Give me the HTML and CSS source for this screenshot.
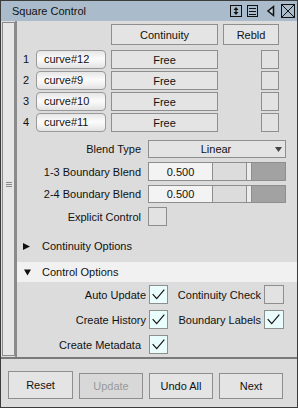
FILE: index.html
```html
<!DOCTYPE html>
<html lang="en">
<head>
    <meta charset="UTF-8">
    <meta name="viewport" content="width=device-width, initial-scale=1.0">
    <title>Square Control</title>
    <link rel="stylesheet" href="styles.css">
</head>
<body>
    <div class="window">
        <div class="titlebar">
            <span class="title">Square Control</span>
            <svg class="tools" width="68" height="18" viewBox="0 0 68 18">
                <!-- resize -->
                <rect x="2.5" y="3.5" width="11" height="11" fill="none" stroke="#111"/>
                <line x1="8" y1="7" x2="8" y2="11" stroke="#111" stroke-width="1.2"/>
                <polygon points="5.5,8 8,5 10.5,8" fill="#111"/>
                <polygon points="5.5,10 8,13 10.5,10" fill="#111"/>
                <!-- menu -->
                <rect x="19.5" y="3.5" width="10" height="11" fill="none" stroke="#111"/>
                <line x1="21" y1="6.5" x2="28" y2="6.5" stroke="#111"/>
                <line x1="21" y1="9.5" x2="28" y2="9.5" stroke="#111"/>
                <line x1="21" y1="12.5" x2="28" y2="12.5" stroke="#111"/>
                <!-- collapse -->
                <polygon points="45.5,4.5 40,9 45.5,13.5" fill="#c8d3dc" stroke="#111" stroke-width="1.5"/>
                <!-- close -->
                <rect x="53.5" y="2.5" width="13" height="13" fill="none" stroke="#111"/>
                <line x1="54" y1="3" x2="66" y2="15" stroke="#111"/>
                <line x1="66" y1="3" x2="54" y2="15" stroke="#111"/>
            </svg>
        </div>

        <div class="main">
            <div class="side">
                <div class="strip">
                    <svg class="grip" width="6" height="6" viewBox="0 0 6 6">
                        <line x1="0" y1="0.5" x2="6" y2="0.5" stroke="#8a8a8a"/>
                        <line x1="0" y1="2.5" x2="6" y2="2.5" stroke="#8a8a8a"/>
                        <line x1="0" y1="4.5" x2="6" y2="4.5" stroke="#8a8a8a"/>
                    </svg>
                </div>
            </div>

            <div class="content">
                <div class="curves">
                    <div></div>
                    <div></div>
                    <div class="btn head">Continuity</div>
                    <div class="btn head rebld">Rebld</div>

                    <div class="num">1</div>
                    <div class="curve">curve#12</div>
                    <div class="btn">Free</div>
                    <div></div>
                    <div class="box"></div>

                    <div class="num">2</div>
                    <div class="curve">curve#9</div>
                    <div class="btn">Free</div>
                    <div></div>
                    <div class="box"></div>

                    <div class="num">3</div>
                    <div class="curve">curve#10</div>
                    <div class="btn">Free</div>
                    <div></div>
                    <div class="box"></div>

                    <div class="num">4</div>
                    <div class="curve">curve#11</div>
                    <div class="btn">Free</div>
                    <div></div>
                    <div class="box"></div>
                </div>

                <div class="form">
                    <div class="label">Blend Type</div>
                    <div class="select">
                        <span class="value">Linear</span>
                        <svg width="7" height="5" viewBox="0 0 7 5"><polygon points="0,0 7,0 3.5,5" fill="#444"/></svg>
                    </div>

                    <div class="label">1-3 Boundary Blend</div>
                    <div class="slider-group">
                        <div class="field">0.500</div>
                        <div class="slider"><div class="track"></div><div class="thumb"></div><div class="fill"></div></div>
                    </div>

                    <div class="label">2-4 Boundary Blend</div>
                    <div class="slider-group">
                        <div class="field">0.500</div>
                        <div class="slider"><div class="track"></div><div class="thumb"></div><div class="fill"></div></div>
                    </div>

                    <div class="label">Explicit Control</div>
                    <div class="box"></div>
                </div>

                <div class="section">
                    <svg class="arrow" width="7" height="7" viewBox="0 0 7 7"><polygon points="0,0 7,3.5 0,7" fill="#111"/></svg>
                    <span>Continuity Options</span>
                </div>

                <div class="section open">
                    <svg class="arrow" width="7" height="7" viewBox="0 0 7 7"><polygon points="0,0.5 7,0.5 3.5,6.5" fill="#111"/></svg>
                    <span>Control Options</span>
                </div>

                <div class="checks">
                    <div class="label">Auto Update</div>
                    <div class="box checked"><svg viewBox="0 0 19 19"><polyline points="3,9 7.5,14 16,4" fill="none" stroke="#111" stroke-width="1.3"/></svg></div>
                    <div class="label">Continuity Check</div>
                    <div class="box wide"></div>

                    <div class="label">Create History</div>
                    <div class="box checked"><svg viewBox="0 0 19 19"><polyline points="3,9 7.5,14 16,4" fill="none" stroke="#111" stroke-width="1.3"/></svg></div>
                    <div class="label">Boundary Labels</div>
                    <div class="box wide checked"><svg viewBox="0 0 19 19"><polyline points="3,9 7.5,14 16,4" fill="none" stroke="#111" stroke-width="1.3"/></svg></div>

                    <div class="label far">Create Metadata</div>
                    <div class="box checked"><svg viewBox="0 0 19 19"><polyline points="3,9 7.5,14 16,4" fill="none" stroke="#111" stroke-width="1.3"/></svg></div>
                </div>
            </div>
        </div>

        <div class="footer">
            <div class="btn action focus">Reset</div>
            <div class="btn action disabled">Update</div>
            <div class="btn action">Undo All</div>
            <div class="btn action">Next</div>
        </div>
    </div>
</body>
</html>
```

FILE: styles.css
```css
body { margin: 0; font-family: "Liberation Sans", Arial, sans-serif; font-size: 11px; color: #111; background: #dcdcdc; }
.window { width: 296px; height: 406px; border: 1px solid #3c3c3c; background: #dcdcdc; display: flex; flex-direction: column; }

.titlebar { height: 20px; line-height: 20px; background: #aabccb; display: flex; justify-content: space-between; padding-left: 11px; }
.title { font-size: 11px; }
.tools { margin-top: 1px; margin-right: 1px; }

.main { height: 336px; display: flex; }
.side { width: 14px; }
.strip { margin: 1px 0 1px 1px; width: 11px; height: 332px; border: 1px solid #8c8c8c; background: #e6e6e6; display: flex; align-items: center; justify-content: center; }
.grip { margin-top: -8px; }
.content { flex: 1; border-left: 2px solid #8a8a8a; padding-top: 3px; }

.btn { background: #e4e4e4; border: 1px solid #8e8e8e; box-sizing: border-box; display: flex; align-items: center; justify-content: center; }
.box { width: 19px; height: 19px; box-sizing: border-box; border: 1px solid #8e8e8e; background: #e2e2e2; }
.box svg { display: block; width: 17px; height: 17px; }
.box.checked { background: #eafdfd; }
.box.wide { width: 20px; }

.curves { display: grid; grid-template-columns: 14px 70px 107px 33px 18px; grid-template-rows: 24px repeat(4, 19px); column-gap: 5px; row-gap: 2px; }
.curves .head { height: 21px; }
.curves .rebld { grid-column: 4 / 6; }
.curves .box { width: 18px; }
.num { padding-left: 6px; line-height: 19px; }
.curve { border: 1px solid #999; border-radius: 4px; padding-left: 7px; line-height: 17px; background: linear-gradient(#e6e6e6, #fbfbfb 45%, #f4f4f4 65%, #e2e2e2); }

.form { margin-top: 8px; display: grid; grid-template-columns: 124px 138px; grid-template-rows: 18px 19px 18px 19px; column-gap: 7px; row-gap: 4px; }
.label { text-align: right; display: flex; align-items: center; justify-content: flex-end; }
.select { background: #e4e4e4; border: 1px solid #8e8e8e; display: flex; align-items: center; padding-right: 3px; }
.select .value { flex: 1; text-align: center; padding-left: 8px; }
.slider-group { display: flex; }
.field { width: 65px; box-sizing: border-box; border: 1px solid #8e8e8e; background: #f3f3f3; display: flex; align-items: center; justify-content: center; }
.slider { flex: 1; display: flex; border: 1px solid #8e8e8e; border-left: none; }
.track { flex: 1; background: #dcdcdc; }
.thumb { width: 4px; background: #ececec; border-left: 1px solid #8e8e8e; border-right: 1px solid #8e8e8e; }
.fill { width: 33px; background: #a2a2a2; }

.section { height: 20px; display: flex; align-items: center; padding-left: 6px; margin-top: 10px; }
.section .arrow { margin-right: 12px; }
.section.open { margin-top: 6px; background: #f1f1f1; padding-left: 7px; }
.section.open .arrow { margin-right: 11px; }

.checks { margin-top: 3px; display: grid; grid-template-columns: 132px 19px 96px 20px; grid-auto-rows: 19px; row-gap: 6px; }
.checks .label { padding-right: 3px; }
.checks .label.far { padding-right: 8px; }

.footer { flex: 1; border-top: 2px solid #7a7a7a; display: flex; align-items: flex-end; gap: 6px; padding: 0 0 8px 7px; }
.btn.action { width: 64px; height: 26px; }
.btn.focus { width: 65px; height: 28px; }
.btn.disabled { color: #9a9a9a; background: #d8d8d8; }
```
